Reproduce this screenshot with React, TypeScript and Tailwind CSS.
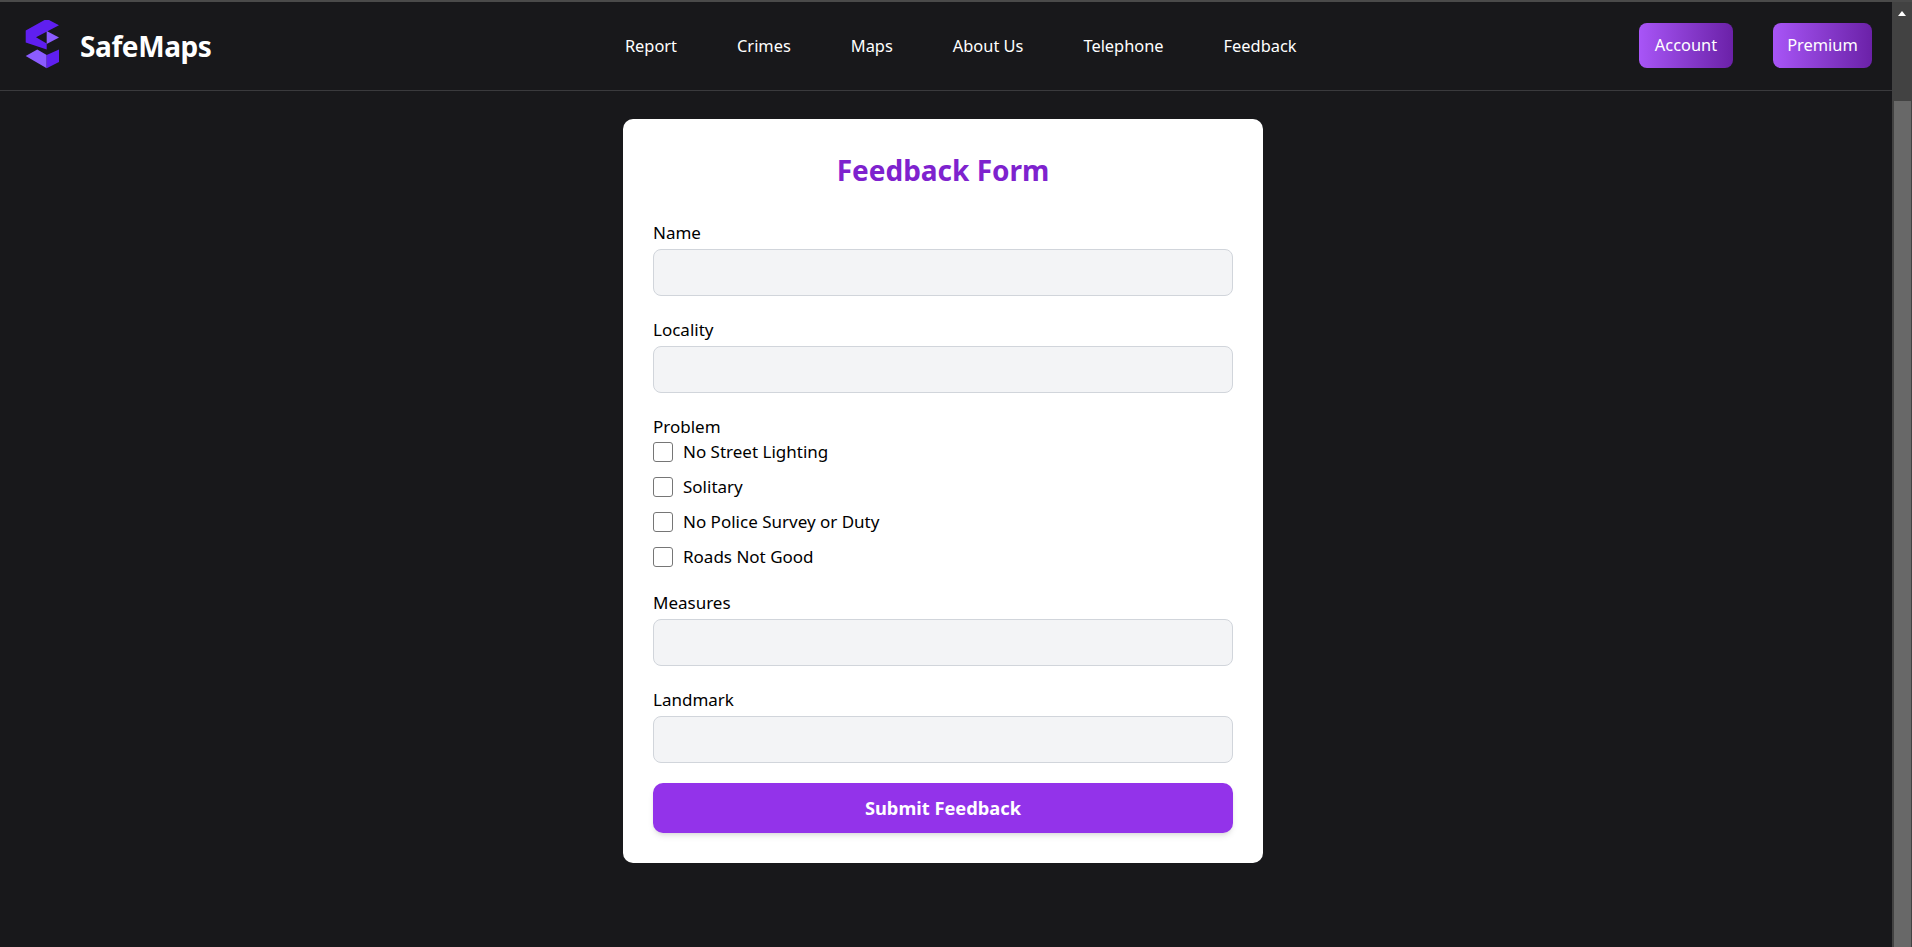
const font = "font-['Noto_Sans','Open_Sans',sans-serif]";

function Logo() {
  return (
    <svg width="36" height="52" viewBox="0 1.5 36 52" className="shrink-0">
      <path d="M0.7 12 L21.7 0.3 L34 6.7 L11 18.7 L21.7 25 L21.7 31 L0.7 24 Z" fill="#5f1ff0" />
      <path d="M21.7 12.5 L34 19 L21.7 25.5 Z" fill="#8b5cff" />
      <path d="M0.7 37.5 L12.3 31 L21.7 36.5 L21.7 49.7 Z" fill="#8b5cff" />
      <path d="M21.7 36.5 L34 31 L34 43.5 L21.7 49.7 Z" fill="#5f1ff0" />
    </svg>
  );
}

function Field({ label, className = "" }: { label: string; className?: string }) {
  return (
    <div className={className}>
      <label className="block text-[17px] leading-[24px] text-black">{label}</label>
      <input className="mt-[4px] block h-[47px] w-full rounded-[8px] border border-[#d1d5db] bg-[#f3f4f6]" />
    </div>
  );
}

function Check({ label }: { label: string }) {
  return (
    <label className="flex h-[24px] items-center gap-[10px] text-[17px] text-black">
      <span className="h-[20px] w-[20px] rounded-[3px] border border-[#767676] bg-white" />
      {label}
    </label>
  );
}

export default function App() {
  const links = ["Report", "Crimes", "Maps", "About Us", "Telephone", "Feedback"];
  return (
    <div className={`flex h-[947px] w-full flex-col overflow-hidden bg-[#18181b] ${font}`}>
      <div className="h-[2px] shrink-0 bg-[#4a4a4a]" />
      <div className="flex min-h-0 flex-1">
        <div className="flex min-w-0 flex-1 flex-col">
          <header className="flex h-[89px] items-center justify-between border-b border-[#3a3a3d] pl-[25px] pr-[20px]">
            <div className="flex items-center gap-[19px]">
              <Logo />
              <span className="text-[28px] font-bold tracking-[-0.4px] text-white">SafeMaps</span>
            </div>
            <nav className="ml-[71px] flex gap-[60px] text-[16.4px] text-white">
              {links.map((l) => (
                <span key={l}>{l}</span>
              ))}
            </nav>
            <div className="mb-[1px] flex gap-[40px] text-[16.4px] text-white">
              <span className="flex h-[45px] w-[94px] items-center justify-center rounded-[8px] bg-gradient-to-r from-[#a855f7] to-[#6b21a8]">Account</span>
              <span className="flex h-[45px] w-[99px] items-center justify-center rounded-[8px] bg-gradient-to-r from-[#a855f7] to-[#6b21a8]">Premium</span>
            </div>
          </header>
          <main className="flex flex-1 items-start justify-center pr-[6px] pt-[28px]">
            <div className="w-[640px] rounded-[10px] bg-white px-[30px] pb-[30px] pt-[30px]">
              <h1 className="text-center text-[28px] font-bold leading-[42px] text-[#7e22ce]">Feedback Form</h1>
              <Field label="Name" className="mt-[30px]" />
              <Field label="Locality" className="mt-[22px]" />
              <div className="mt-[22px]">
                <div className="text-[17px] leading-[24px] text-black">Problem</div>
                <div className="mt-[1px] flex flex-col gap-[11px]">
                  <Check label="No Street Lighting" />
                  <Check label="Solitary" />
                  <Check label="No Police Survey or Duty" />
                  <Check label="Roads Not Good" />
                </div>
              </div>
              <Field label="Measures" className="mt-[22px]" />
              <Field label="Landmark" className="mt-[22px]" />
              <button className="mt-[20px] h-[50px] w-full rounded-[10px] bg-[#9333ea] text-[18.3px] font-bold text-white shadow-md">Submit Feedback</button>
            </div>
          </main>
        </div>
        <div className="flex w-[20px] shrink-0 flex-col items-center bg-[#424242]">
          <div className="mt-[9px] h-0 w-0 border-x-[4.5px] border-b-[5px] border-x-transparent border-b-white" />
          <div className="ml-[1px] mt-[85px] w-[17px] flex-1 bg-[#686868]" />
        </div>
      </div>
    </div>
  );
}
